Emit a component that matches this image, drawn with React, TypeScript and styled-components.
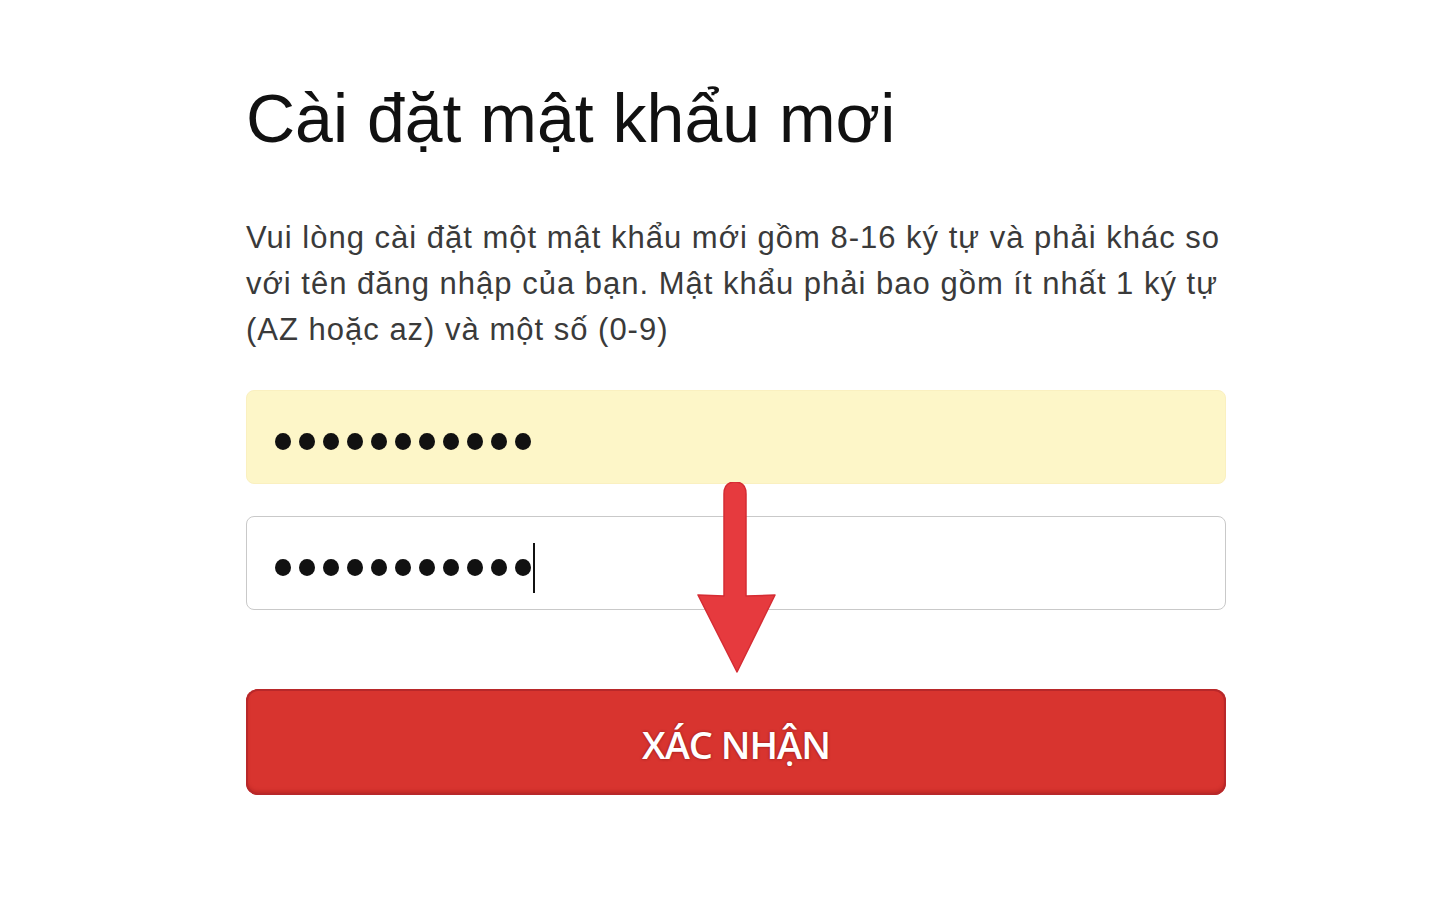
import React from 'react';
import styled, { createGlobalStyle } from 'styled-components';

const GlobalStyle = createGlobalStyle`
  html, body {
    margin: 0;
    padding: 0;
    background: #ffffff;
  }
  body {
    font-family: "Liberation Sans", Arial, sans-serif;
  }
`;

const Page = styled.div`
  width: 1440px;
  height: 900px;
  background: #fff;
  overflow: hidden;
`;

const Form = styled.div`
  width: 980px;
  margin-left: 246px;
  padding-top: 78px;
`;

const Title = styled.h1`
  margin: 0;
  font-family: "Liberation Sans", Arial, sans-serif;
  font-weight: 400;
  font-size: 68px;
  line-height: 80px;
  letter-spacing: 0;
  color: #111;
`;

const Hint = styled.p`
  margin: 57px 0 0;
  font-family: "Liberation Sans", Arial, sans-serif;
  font-size: 31px;
  line-height: 46px;
  letter-spacing: 1px;
  color: #3a3a3a;
`;

const Fields = styled.div`
  position: relative;
  margin-top: 37px;
  display: flex;
  flex-direction: column;
  gap: 32px;
`;

const Field = styled.div<{ $filled?: boolean }>`
  height: 94px;
  box-sizing: border-box;
  border-radius: 8px;
  padding: 9px 28px 0;
  display: flex;
  align-items: center;
  background: ${p => (p.$filled ? '#fdf6c8' : '#ffffff')};
  border: 1px solid ${p => (p.$filled ? '#faf0c0' : '#c9c9c9')};
`;

const Dots = styled.div`
  display: flex;
  align-items: center;
  gap: 8px;
`;

const Dot = styled.span`
  width: 16px;
  height: 17px;
  border-radius: 50%;
  background: #111;
`;

const Caret = styled.span`
  width: 2px;
  height: 50px;
  margin-left: 2px;
  background: #111;
`;

const Arrow = styled.svg`
  position: absolute;
  left: 450px;
  top: 92px;
  width: 80px;
  height: 192px;
`;

const Button = styled.button`
  margin-top: 79px;
  width: 980px;
  height: 106px;
  border: none;
  border-radius: 12px;
  background: #d8342f;
  box-shadow: inset 0 0 0 2px #b8282a, inset 0 -3px 4px rgba(120, 10, 10, 0.35);
  color: #fff;
  font-family: "Open Sans", "Liberation Sans", sans-serif;
  font-weight: 600;
  font-size: 38px;
  line-height: 1;
  padding: 4px 0 0;
  letter-spacing: -1px;
  text-shadow: 0 0 3px rgba(90, 0, 0, 0.6);
  cursor: pointer;
`;

const PasswordDots: React.FC<{ count: number }> = ({ count }) => (
  <Dots>
    {Array.from({ length: count }).map((_, i) => (
      <Dot key={i} />
    ))}
  </Dots>
);

const App: React.FC = () => {
  return (
    <Page>
      <GlobalStyle />
      <Form>
        <Title>Cài đặt mật khẩu mơi</Title>
        <Hint>
          Vui lòng cài đặt một mật khẩu mới gồm 8-16 ký tự và phải khác so
          <br />
          với tên đăng nhập của bạn. Mật khẩu phải bao gồm ít nhất 1 ký tự
          <br />
          (AZ hoặc az) và một số (0-9)
        </Hint>
        <Fields>
          <Field $filled>
            <PasswordDots count={11} />
          </Field>
          <Field>
            <PasswordDots count={11} />
            <Caret />
          </Field>
          <Arrow viewBox="0 0 80 192">
            <path
              d="M28 12 Q28 0 39 0 Q50 0 50 12 L50 114 L79 113 L41 190 L2 113 L28 114 Z"
              fill="#e63a3e"
              stroke="#d52c33"
              strokeWidth="1.5"
              strokeLinejoin="round"
            />
          </Arrow>
        </Fields>
        <Button>XÁC NHẬN</Button>
      </Form>
    </Page>
  );
};

export default App;
